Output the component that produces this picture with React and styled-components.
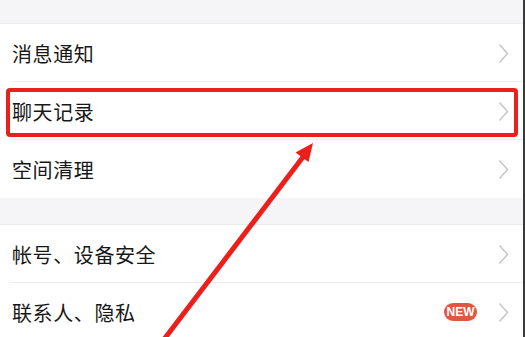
import styled, { createGlobalStyle } from "styled-components";

const Global = createGlobalStyle`
  html, body { margin: 0; padding: 0; background: #f5f5f7; overflow: hidden; }
`;

const Screen = styled.div`
  position: relative;
  width: 523px;
  height: 337px;
  background: #f5f5f7;
  border-right: 2px solid #3a3a3a;
  overflow: hidden;
  font-family: "Noto Sans CJK SC", "Noto Sans", sans-serif;
`;

const Gap = styled.div`
  height: ${props => props.h}px;
  background: #f5f5f7;
  border-bottom: 1px solid #ececee;
  box-sizing: border-box;
`;

const Group = styled.div`
  background: #fff;
`;

const Row = styled.div`
  position: relative;
  display: flex;
  align-items: center;
  height: 58px;
  padding: 0 14px 0 12px;
  box-sizing: border-box;
  &::after {
    content: "";
    display: ${props => props.last ? "none" : "block"};
    position: absolute;
    left: 10px;
    right: 0;
    bottom: 0;
    height: 1px;
    background: #ededed;
  }
`;

const Label = styled.span`
  flex: 1;
  font-size: 20px;
  color: #181818;
  letter-spacing: 0.6px;
`;

const Badge = styled.span`
  display: inline-flex;
  align-items: center;
  justify-content: center;
  width: 33px;
  height: 18px;
  border-radius: 9px;
  background: #e0573f;
  color: #fff;
  font-family: "Liberation Sans", Arial, sans-serif;
  font-weight: bold;
  font-size: 12px;
  margin-right: 21px;
`;

const Chevron = () => (
  <svg width="11" height="21" viewBox="0 0 11 21">
    <path d="M1.5 1.5 L9.5 10.5 L1.5 19.5" fill="none" stroke="#c6c6ca" strokeWidth="1.5" />
  </svg>
);

const Highlight = styled.div`
  position: absolute;
  left: 6px;
  top: 88px;
  width: 512px;
  height: 49px;
  box-sizing: border-box;
  border: 4px solid #ec1f1a;
  border-radius: 4px;
`;

const Overlay = styled.svg`
  position: absolute;
  left: 0;
  top: 0;
`;

const items1 = ["消息通知", "聊天记录", "空间清理"];

export default function App() {
  return (
    <>
      <Global />
      <Screen>
        <Gap h={24} />
        <Group>
          {items1.map((t, i) => (
            <Row key={t} last={i === items1.length - 1}>
              <Label>{t}</Label>
              <Chevron />
            </Row>
          ))}
        </Group>
        <Gap h={27} />
        <Group>
          <Row>
            <Label>帐号、设备安全</Label>
            <Chevron />
          </Row>
          <Row last>
            <Label>联系人、隐私</Label>
            <Badge>NEW</Badge>
            <Chevron />
          </Row>
        </Group>
        <Highlight />
        <Overlay width="525" height="337">
          <line x1="162" y1="342" x2="303" y2="157" stroke="#ec1f1a" strokeWidth="5" />
          <polygon points="313,143 295.5,152.5 308.5,162" fill="#ec1f1a" />
        </Overlay>
      </Screen>
    </>
  );
}
